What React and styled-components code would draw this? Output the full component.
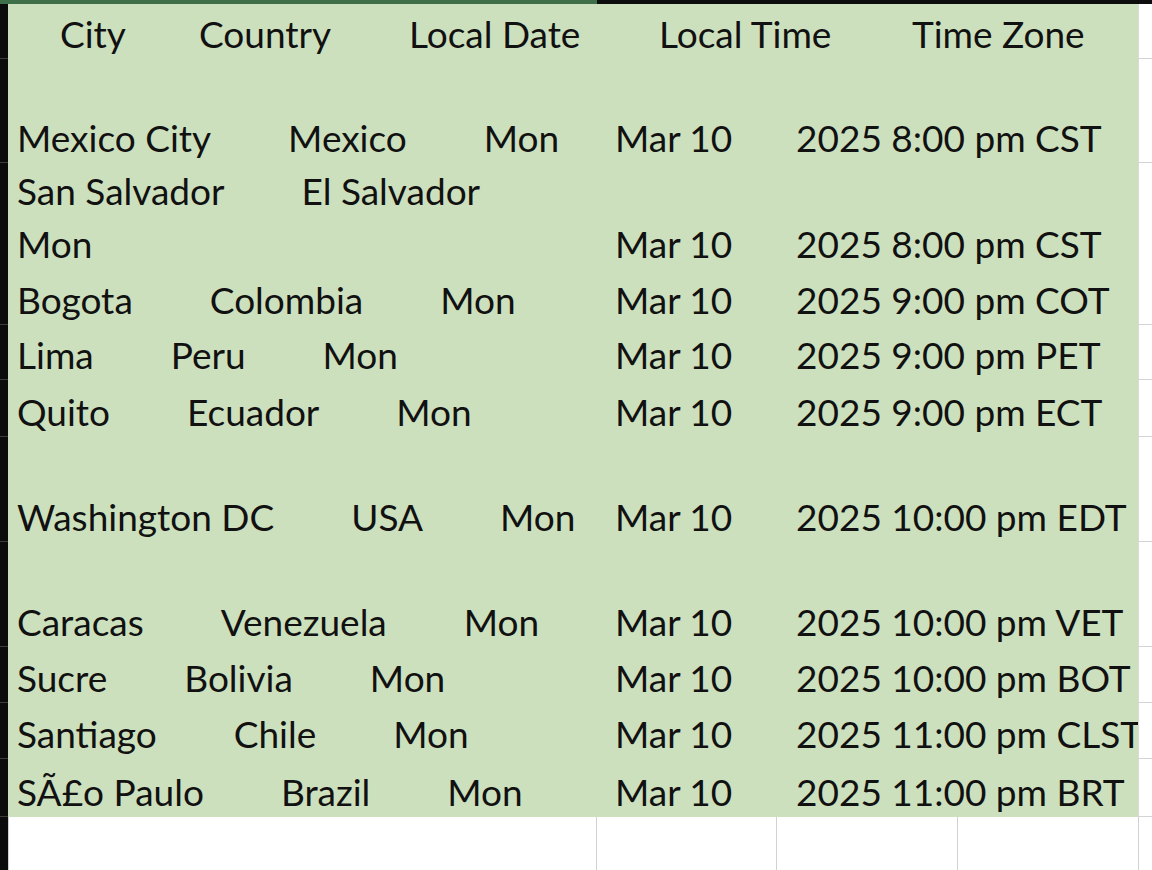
import React from "react";
import styled, { createGlobalStyle } from "styled-components";

const GlobalStyle = createGlobalStyle`
  html, body {
    margin: 0;
    padding: 0;
    background: #ffffff;
  }
`;

const Page = styled.div`
  width: 1152px;
  height: 870px;
  overflow: hidden;
  background: #ffffff;
  font-family: Lato, "Open Sans", sans-serif;
  color: #111111;
`;

const TopBar = styled.div`
  display: flex;
  height: 4px;
`;

const TopSeg = styled.div`
  width: ${(p) => p.w || "auto"};
  flex: ${(p) => (p.w ? "none" : "1")};
  background: ${(p) => p.bg};
`;

const Row = styled.div`
  display: grid;
  grid-template-columns: 8px 1130px 14px;
  height: ${(p) => p.h}px;
`;

const RowHead = styled.div`
  background: #0c0c0c;
  border-bottom: 1px solid #3c3c3c;
`;

const Side = styled.div`
  background: #ffffff;
  border-left: 1px solid #d9d9d9;
  border-bottom: 1px solid #d4d4d4;
`;

const Cell = styled.div`
  background: #cde0be;
  display: flex;
  flex-direction: column;
  justify-content: flex-end;
  padding-left: 9px;
`;

const Line = styled.div`
  display: grid;
  grid-template-columns: 598px 181px 1fr;
  box-sizing: border-box;
  height: 53px;
  padding-top: 4px;
  line-height: 48px;
  font-size: 37px;
  white-space: nowrap;
`;

const Group = styled.div`
  display: flex;
  gap: 77px;
`;

const HeadLine = styled.div`
  display: grid;
  grid-template-columns: 43px 139px 210px 250px 253px 1fr;
  box-sizing: border-box;
  height: 53px;
  padding-top: 6px;
  line-height: 44px;
  font-size: 37px;
  white-space: nowrap;
`;

const Bottom = styled.div`
  display: grid;
  grid-template-columns: 8px 588px 180px 181px 181px 14px;
  height: 53px;
`;

const Blank = styled.div`
  background: ${(p) => (p.dark ? "#0c0c0c" : "#ffffff")};
  border-left: ${(p) => (p.dark ? "none" : "1px solid #d2d2d2")};
`;

const rows = [
  { h: 104, lines: [{ g: ["Mexico City", "Mexico", "Mon"], d: "Mar 10", t: "2025 8:00 pm CST" }] },
  {
    h: 105,
    lines: [
      { g: ["San Salvador", "El Salvador"] },
      { g: ["Mon"], d: "Mar 10", t: "2025 8:00 pm CST" },
    ],
  },
  { h: 57, lines: [{ g: ["Bogota", "Colombia", "Mon"], d: "Mar 10", t: "2025 9:00 pm COT" }] },
  { h: 55, lines: [{ g: ["Lima", "Peru", "Mon"], d: "Mar 10", t: "2025 9:00 pm PET" }] },
  { h: 57, lines: [{ g: ["Quito", "Ecuador", "Mon"], d: "Mar 10", t: "2025 9:00 pm ECT" }] },
  { h: 105, lines: [{ g: ["Washington DC", "USA", "Mon"], d: "Mar 10", t: "2025 10:00 pm EDT" }] },
  { h: 105, lines: [{ g: ["Caracas", "Venezuela", "Mon"], d: "Mar 10", t: "2025 10:00 pm VET" }] },
  { h: 56, lines: [{ g: ["Sucre", "Bolivia", "Mon"], d: "Mar 10", t: "2025 10:00 pm BOT" }] },
  { h: 56, lines: [{ g: ["Santiago", "Chile", "Mon"], d: "Mar 10", t: "2025 11:00 pm CLST" }] },
  { h: 58, lines: [{ g: ["SÃ£o Paulo", "Brazil", "Mon"], d: "Mar 10", t: "2025 11:00 pm BRT" }] },
];

const headers = ["City", "Country", "Local Date", "Local Time", "Time Zone"];

export default function App() {
  return (
    <Page>
      <GlobalStyle />
      <TopBar>
        <TopSeg w="597px" bg="#3e6f48" />
        <TopSeg bg="#0d0d0d" />
      </TopBar>

      <Row h={55}>
        <RowHead />
        <Cell>
          <HeadLine>
            <span />
            {headers.map((h) => (
              <span key={h}>{h}</span>
            ))}
          </HeadLine>
        </Cell>
        <Side />
      </Row>

      {rows.map((r, i) => (
        <Row h={r.h} key={i}>
          <RowHead />
          <Cell>
            {r.lines.map((l, j) => (
              <Line key={j}>
                <Group>
                  {l.g.map((w) => (
                    <span key={w}>{w}</span>
                  ))}
                </Group>
                <span>{l.d}</span>
                <span>{l.t}</span>
              </Line>
            ))}
          </Cell>
          <Side />
        </Row>
      ))}

      <Bottom>
        <Blank dark />
        <Blank />
        <Blank />
        <Blank />
        <Blank />
        <Blank />
      </Bottom>
    </Page>
  );
}
